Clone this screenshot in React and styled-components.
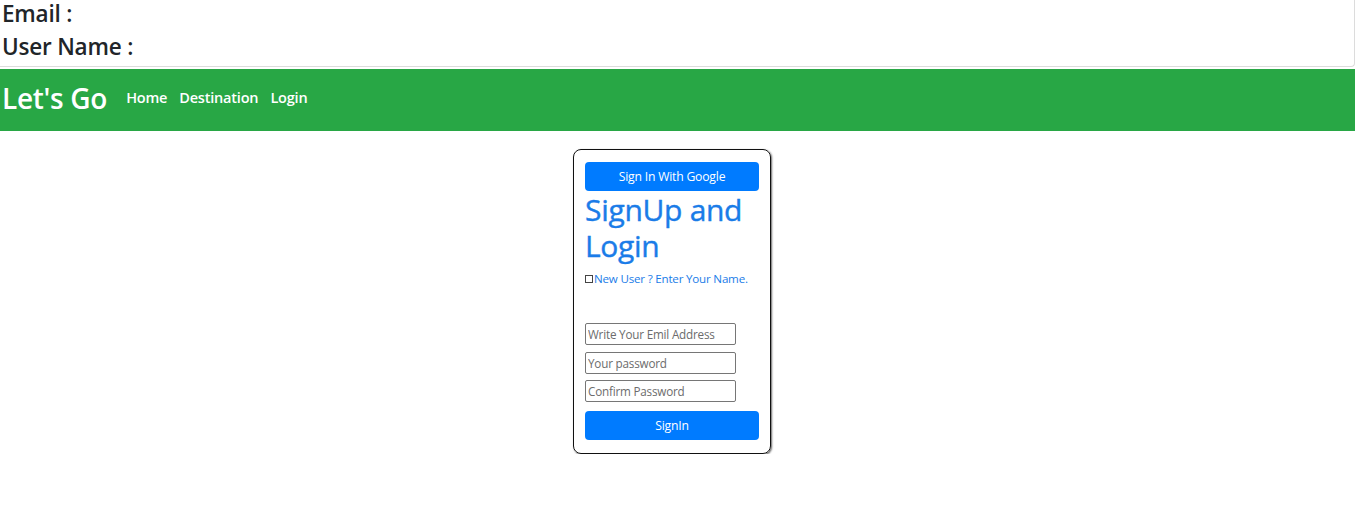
import React from "react";
import styled, { createGlobalStyle } from "styled-components";

const GlobalStyle = createGlobalStyle`
  * { box-sizing: border-box; }
  body {
    margin: 0;
    font-family: "Open Sans", "Noto Sans", sans-serif;
    color: #212529;
    background: #fff;
  }
`;

const UserBox = styled.div`
  height: 67px;
  border: 1px solid #dcdcdc;
  border-top: none;
  border-left: none;
  border-radius: 0 0 4px 0;
  padding: 0 2px;
  display: flex;
  flex-direction: column;
`;

const UserLine = styled.h4`
  margin: 0;
  font-size: 22.5px;
  font-weight: 600;
  line-height: 33px;
  height: 33px;
  margin-top: ${(p) => (p.first ? "-3px" : "0")};
  letter-spacing: -0.2px;
`;

const NavBar = styled.nav`
  margin-top: 2px;
  height: 62px;
  background: #28a745;
  display: flex;
  align-items: center;
  padding: 0 2px 5px;
  gap: 12px;
`;

const Brand = styled.span`
  color: #fff;
  font-size: 28px;
  font-weight: 600;
  letter-spacing: -0.3px;
  margin-right: 7px;
`;

const NavLink = styled.a`
  color: #fff;
  font-size: 14.5px;
  font-weight: 600;
  text-decoration: none;
  letter-spacing: -0.2px;
`;

const Main = styled.main`
  display: flex;
  justify-content: center;
  padding: 18px 11px 0 0;
`;

const Card = styled.div`
  width: 198px;
  height: 305px;
  border: 1px solid #111;
  border-radius: 8px;
  box-shadow: 1px 1px 2px rgba(0, 0, 0, 0.6);
  padding: 12px 11px;
  display: flex;
  flex-direction: column;
`;

const BlueButton = styled.button`
  width: 174px;
  height: 29px;
  border: none;
  border-radius: 4px;
  background: #007bff;
  color: #fff;
  font-family: inherit;
  font-size: 12.2px;
  letter-spacing: -0.2px;
  margin-top: ${(p) => p.top || "0"};
`;

const Title = styled.h2`
  margin: 1px 0 0;
  color: #1a7ce8;
  font-size: 30px;
  font-weight: 500;
  line-height: 36px;
  letter-spacing: -0.3px;
  -webkit-text-stroke: 0.4px #1a7ce8;
`;

const CheckRow = styled.label`
  display: flex;
  align-items: center;
  color: #1a7ce8;
  font-size: 11.6px;
  margin-top: 7px;
  letter-spacing: -0.2px;
`;

const Box = styled.span`
  width: 8px;
  height: 8px;
  border: 1px solid #444;
  display: inline-block;
  margin-right: 1px;
`;

const Form = styled.div`
  display: flex;
  flex-direction: column;
  gap: 6.5px;
  margin-top: 37px;
`;

const Input = styled.input`
  width: 151px;
  height: 22px;
  border: 1px solid #767676;
  border-radius: 2px;
  padding: 0 2px;
  font-family: inherit;
  font-size: 11.7px;
  letter-spacing: -0.2px;
  &::placeholder { color: #6c6c6c; }
`;

export default function App() {
  return (
    <>
      <GlobalStyle />
      <UserBox>
        <UserLine first>Email :</UserLine>
        <UserLine>User Name :</UserLine>
      </UserBox>
      <NavBar>
        <Brand>Let's Go</Brand>
        <NavLink href="#">Home</NavLink>
        <NavLink href="#">Destination</NavLink>
        <NavLink href="#">Login</NavLink>
      </NavBar>
      <Main>
        <Card>
          <BlueButton>Sign In With Google</BlueButton>
          <Title>SignUp and Login</Title>
          <CheckRow>
            <Box />
            New User ? Enter Your Name.
          </CheckRow>
          <Form>
            <Input placeholder="Write Your Emil Address" />
            <Input placeholder="Your password" />
            <Input placeholder="Confirm Password" />
          </Form>
          <BlueButton top="9px">SignIn</BlueButton>
        </Card>
      </Main>
    </>
  );
}
